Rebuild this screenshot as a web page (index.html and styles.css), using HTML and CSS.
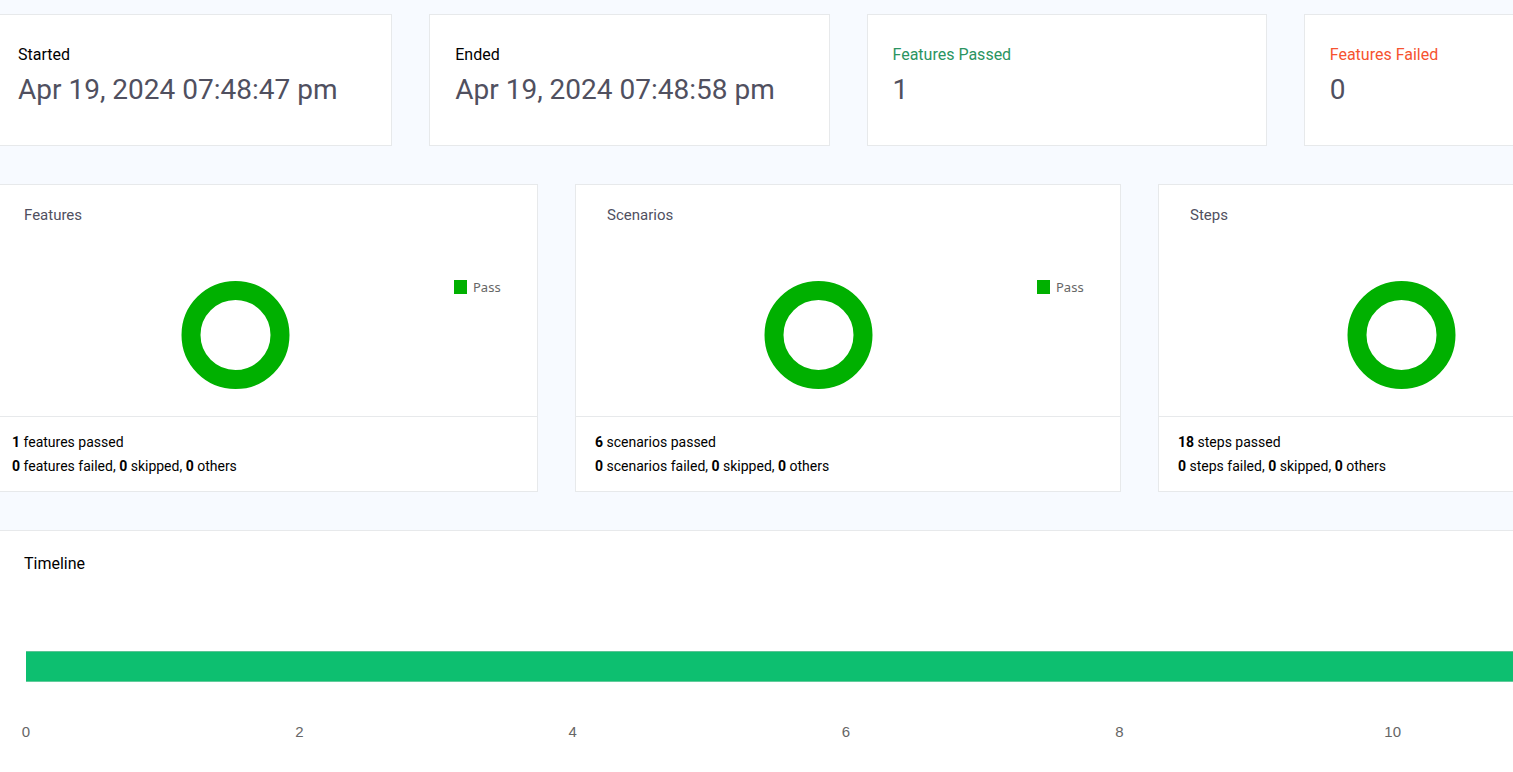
FILE: index.html
```html
<!DOCTYPE html>
<html lang="en">
<head>
<meta charset="utf-8">
<title>Test Report Dashboard</title>
<link rel="stylesheet" href="styles.css">
</head>
<body>
<main class="dashboard">
  <section class="row">
    <article class="card stat">
      <h2 class="stat-label">Started</h2>
      <p class="stat-value">Apr 19, 2024 07:48:47 pm</p>
    </article>
    <article class="card stat">
      <h2 class="stat-label">Ended</h2>
      <p class="stat-value">Apr 19, 2024 07:48:58 pm</p>
    </article>
    <article class="card stat">
      <h2 class="stat-label passed">Features Passed</h2>
      <p class="stat-value">1</p>
    </article>
    <article class="card stat">
      <h2 class="stat-label failed">Features Failed</h2>
      <p class="stat-value">0</p>
    </article>
  </section>

  <section class="row">
    <article class="card">
      <h2 class="chart-title">Features</h2>
      <div class="chart">
        <svg class="donut" viewBox="0 0 108 110" aria-hidden="true"><circle cx="54" cy="55" r="44.5"/></svg>
        <div class="legend"><span class="swatch"></span>Pass</div>
      </div>
      <footer class="summary">
        <p><b>1</b> features passed</p>
        <p><b>0</b> features failed, <b>0</b> skipped, <b>0</b> others</p>
      </footer>
    </article>
    <article class="card">
      <h2 class="chart-title">Scenarios</h2>
      <div class="chart">
        <svg class="donut" viewBox="0 0 108 110" aria-hidden="true"><circle cx="54" cy="55" r="44.5"/></svg>
        <div class="legend"><span class="swatch"></span>Pass</div>
      </div>
      <footer class="summary">
        <p><b>6</b> scenarios passed</p>
        <p><b>0</b> scenarios failed, <b>0</b> skipped, <b>0</b> others</p>
      </footer>
    </article>
    <article class="card">
      <h2 class="chart-title">Steps</h2>
      <div class="chart">
        <svg class="donut" viewBox="0 0 108 110" aria-hidden="true"><circle cx="54" cy="55" r="44.5"/></svg>
        <div class="legend"></div>
      </div>
      <footer class="summary">
        <p><b>18</b> steps passed</p>
        <p><b>0</b> steps failed, <b>0</b> skipped, <b>0</b> others</p>
      </footer>
    </article>
  </section>

  <section class="card timeline">
    <h2 class="timeline-title">Timeline</h2>
    <div class="bar"></div>
    <ol class="axis">
      <li><span>0</span></li>
      <li><span>2</span></li>
      <li><span>4</span></li>
      <li><span>6</span></li>
      <li><span>8</span></li>
      <li><span>10</span></li>
    </ol>
  </section>
</main>
</body>
</html>
```
FILE: styles.css
```css
* {
  box-sizing: border-box;
}

body {
  margin: 0;
  overflow: hidden;
  background: #f7faff;
  color: #000;
  font-family: Roboto, "Liberation Sans", sans-serif;
  font-size: 14px;
  line-height: 24px;
}

h2,
p,
ol {
  margin: 0;
  padding: 0;
  font-weight: 400;
}

/* The report is wider than the window and scrolled a little to the right. */
.dashboard {
  display: flex;
  flex-direction: column;
  gap: 38px;
  margin: 0 -191px 0 -8px;
  padding-top: 14px;
}

.row {
  display: flex;
  gap: 37px;
}

.card {
  flex: 1 1 0;
  min-width: 0;
  background: #fff;
  border: 1px solid #e7e9eb;
}

.stat {
  padding: 28px 25px 32px;
}

.stat-label {
  font-size: 16px;
}

.passed {
  color: #2a9461;
}

.failed {
  color: #f6532f;
}

.stat-value {
  color: #50505f;
  font-size: 28px;
  line-height: 46px;
}

.chart-title {
  padding: 18px 31px 0;
  color: #50505f;
  font-size: 15px;
}

.chart {
  display: flex;
  align-items: flex-start;
  padding: 53px 0 26px 24px;
}

.donut {
  flex: 1 1 0;
  height: 110px;
}

.donut circle {
  fill: none;
  stroke: #00b000;
  stroke-width: 19;
}

.legend {
  display: flex;
  align-items: center;
  gap: 6px;
  width: 83px;
  line-height: 14px;
  color: #666;
  font-family: "Noto Sans", sans-serif;
  font-size: 13px;
}

.swatch {
  width: 13px;
  height: 14px;
  background: #00b000;
}

.summary {
  padding: 13px 19px;
  border-top: 1px solid #e7e9eb;
}

.timeline {
  padding: 21px 37px 40px 33px;
}

.timeline-title {
  margin-left: -2px;
  font-size: 16px;
}

.bar {
  height: 31px;
  margin: 75px 0 38px;
  background: #0dbf70;
  border-top: 1px solid #5cc395;
  border-bottom: 1px solid #62cb9b;
}

.axis {
  display: grid;
  grid-template-columns: repeat(6, 1fr);
  list-style: none;
  color: #666;
  font-family: "Liberation Sans", Arial, sans-serif;
  font-size: 15px;
}

.axis span {
  display: flex;
  justify-content: center;
  width: 0;
}
```
